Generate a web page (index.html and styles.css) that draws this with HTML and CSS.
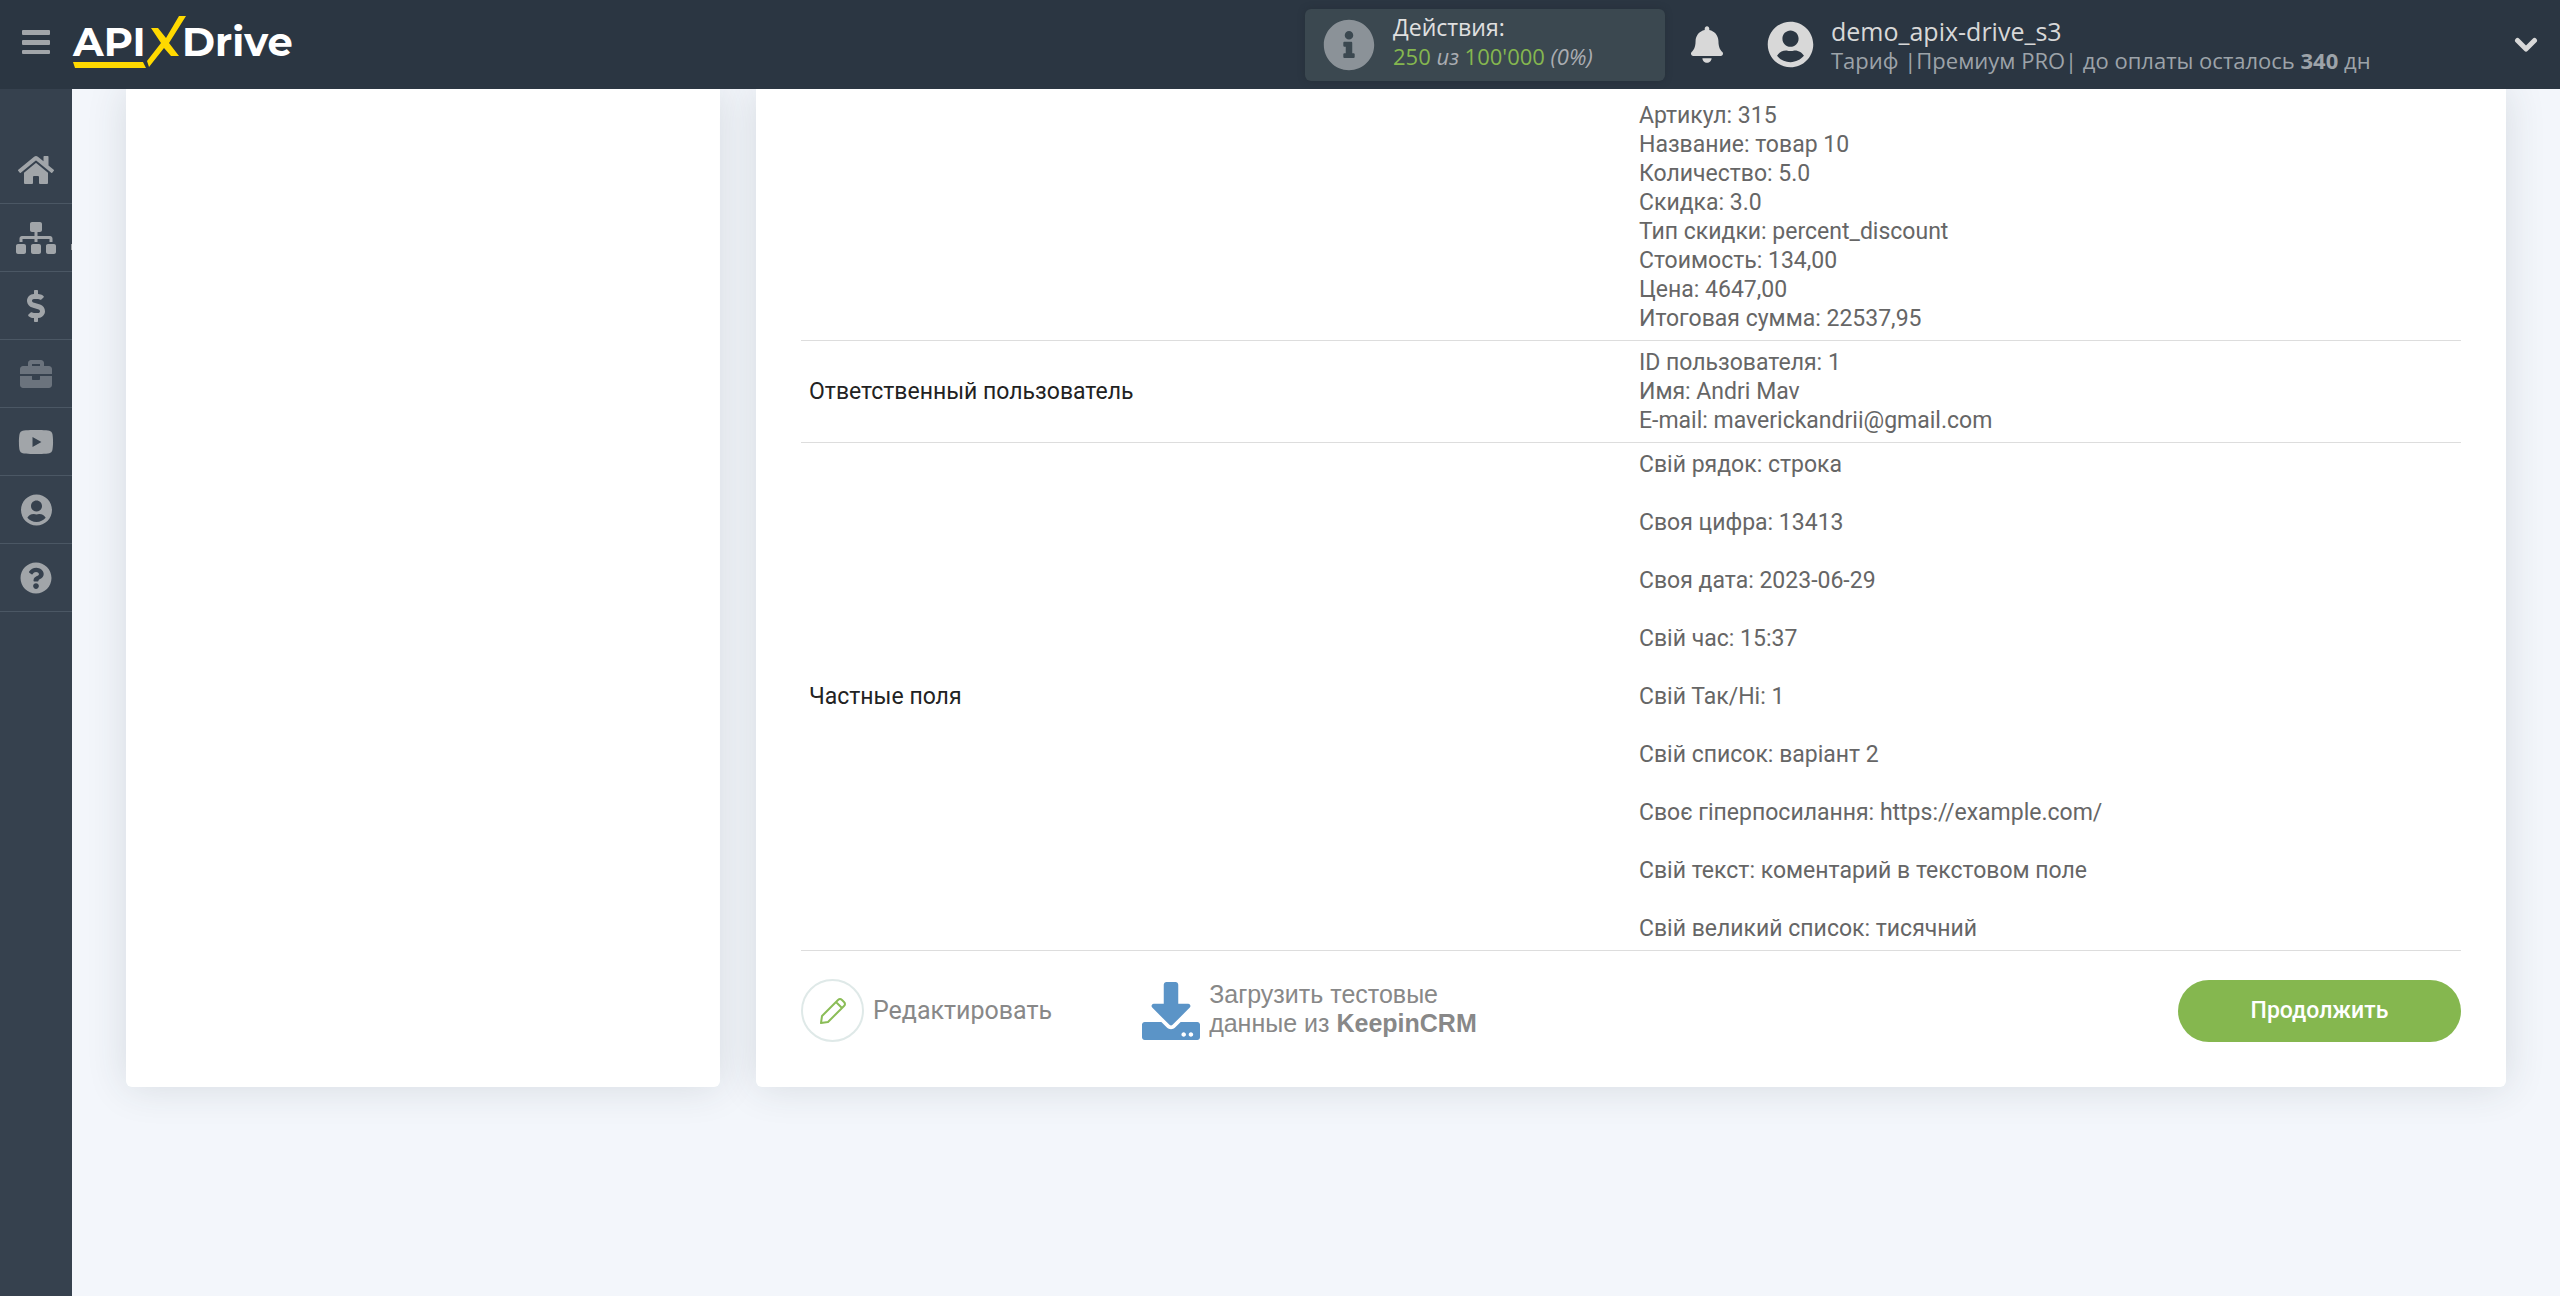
FILE: index.html
```html
<!DOCTYPE html>
<html lang="ru">
<head>
<meta charset="utf-8">
<title>APIX-Drive</title>
<link rel="stylesheet" href="styles.css">
</head>
<body>
<header class="topbar">
  <button class="icon-btn menu-btn" type="button" aria-label="Меню">
    <svg width="28" height="24" viewBox="0 0 28 24" fill="currentColor"><rect width="28" height="5" rx="1"/><rect y="10" width="28" height="5" rx="1"/><rect y="20" width="28" height="4" rx="1"/></svg>
  </button>
  <a class="logo" href="#" aria-label="APIX-Drive">
    <svg width="222" height="56" viewBox="0 0 222 56">
      <g class="logo-text"><text x="1" y="44">API</text><text x="110" y="44">Drive</text></g>
      <path class="logo-mark" d="M1 50H71L74 56H3zM75 49L89 31 79 16H86L94 26 107 4H114L97 31 107 44H99L92 36 77 55z"/>
    </svg>
  </a>
  <div class="usage">
    <svg class="usage-icon" width="52" height="52" viewBox="0 0 512 512" fill="currentColor"><path d="M256 8C119 8 8 119 8 256s111 248 248 248 248-111 248-248S393 8 256 8zm0 110a42 42 0 1 1 0 84 42 42 0 1 1 0-84zm56 254c0 7-5 12-12 12h-88c-7 0-12-5-12-12v-24c0-7 5-12 12-12h12v-64h-12c-7 0-12-5-12-12v-24c0-7 5-12 12-12h64c7 0 12 5 12 12v100h12c7 0 12 5 12 12z"/></svg>
    <div class="usage-text">
      <div class="usage-title">Действия:</div>
      <div class="usage-value"><span class="green">250</span> <i>из</i> <span class="green">100'000</span> <i>(0%)</i></div>
    </div>
  </div>
  <button class="icon-btn bell" type="button" aria-label="Уведомления">
    <svg width="32" height="37" viewBox="0 0 448 512" fill="currentColor"><path d="M224 512c35.320 0 63.970-28.650 63.970-64H160.030c0 35.350 28.650 64 63.970 64zm215.390-149.710c-19.320-20.760-55.470-51.990-55.470-154.290 0-77.700-54.480-139.900-127.940-155.160V32c0-17.670-14.320-32-31.980-32s-31.980 14.330-31.980 32v20.840C118.560 68.100 64.080 130.300 64.080 208c0 102.300-36.150 133.530-55.470 154.290-6 6.450-8.660 14.160-8.610 21.710.11 16.400 12.980 32 32.100 32h383.800c19.120 0 32-15.600 32.100-32 .05-7.550-2.610-15.270-8.610-21.710z"/></svg>
  </button>
  <div class="account">
    <svg width="47" height="47" viewBox="0 0 496 512" fill="currentColor"><path d="M248 8C111 8 0 119 0 256s111 248 248 248 248-111 248-248S385 8 248 8zm0 96c48.600 0 88 39.400 88 88s-39.400 88-88 88-88-39.400-88-88 39.400-88 88-88zm0 344c-58.700 0-111.300-26.600-146.500-68.200 18.800-35.400 55.600-59.800 98.500-59.800 2.400 0 4.800.4 7.100 1.100 13 4.200 26.600 6.900 40.900 6.900 14.300 0 28-2.700 40.900-6.900 2.300-.7 4.700-1.100 7.100-1.100 42.900 0 79.700 24.400 98.500 59.800C359.300 421.400 306.700 448 248 448z"/></svg>
    <div class="account-text">
      <div class="account-name">demo_apix-drive_s3</div>
      <div class="account-plan">Тариф |Премиум PRO| до оплаты осталось <b>340</b> дн</div>
    </div>
  </div>
  <button class="icon-btn expand" type="button" aria-label="Развернуть">
    <svg width="24" height="16" viewBox="0 0 24 16" fill="none" stroke="currentColor" stroke-width="5" stroke-linecap="round" stroke-linejoin="round"><path d="M3.500 3.500L12 12L20.500 3.500"/></svg>
  </button>
</header>
<div class="shell">
  <nav class="sidebar">
    <a href="#" aria-label="Главная"><svg width="36" height="32" viewBox="0 0 576 512" fill="currentColor"><path d="M280.370 148.260L96 300.110V464a16 16 0 0 0 16 16l112.060-.29a16 16 0 0 0 15.920-16V368a16 16 0 0 1 16-16h64a16 16 0 0 1 16 16v95.640a16 16 0 0 0 16 16.050L464 480a16 16 0 0 0 16-16V300L295.670 148.260a12.190 12.190 0 0 0-15.300 0zM571.600 251.470L488 182.560V44.050a12 12 0 0 0-12-12h-56a12 12 0 0 0-12 12v72.610L318.470 43a48 48 0 0 0-61 0L4.340 251.470a12 12 0 0 0-1.600 16.900l25.500 31A12 12 0 0 0 45.150 301l235.220-193.740a12.190 12.190 0 0 1 15.300 0L530.900 301a12 12 0 0 0 16.900-1.600l25.500-31a12 12 0 0 0-1.700-16.930z"/></svg></a>
    <a class="has-sub" href="#" aria-label="Связи"><svg width="40" height="32" viewBox="0 0 640 512" fill="currentColor"><path d="M128 352H32c-17.670 0-32 14.330-32 32v96c0 17.670 14.330 32 32 32h96c17.670 0 32-14.330 32-32v-96c0-17.670-14.330-32-32-32zm-24-80h192v48h48v-48h192v48h48v-57.590c0-21.170-17.230-38.410-38.410-38.410H344v-64h40c17.670 0 32-14.330 32-32V32c0-17.670-14.330-32-32-32H256c-17.670 0-32 14.330-32 32v96c0 17.670 14.330 32 32 32h40v64H94.410C73.230 224 56 241.230 56 262.410V320h48v-48zm264 80h-96c-17.670 0-32 14.330-32 32v96c0 17.670 14.330 32 32 32h96c17.670 0 32-14.330 32-32v-96c0-17.670-14.330-32-32-32zm240 0h-96c-17.670 0-32 14.330-32 32v96c0 17.670 14.330 32 32 32h96c17.670 0 32-14.330 32-32v-96c0-17.670-14.330-32-32-32z"/></svg></a>
    <a href="#" aria-label="Оплата"><svg width="18" height="32" viewBox="0 0 288 512" fill="currentColor"><path d="M209.200 233.400l-108-31.600C88.700 198.200 80 186.500 80 173.500c0-16.300 13.200-29.500 29.500-29.500h66.300c12.200 0 24.200 3.700 34.200 10.500 6.100 4.100 14.300 3.100 19.500-2l34.800-34c7.100-6.900 6.100-18.400-1.800-24.500C238 74.800 207.400 64.100 176 64V16c0-8.800-7.200-16-16-16h-32c-8.800 0-16 7.200-16 16v48h-2.500C45.800 64-5.400 118.700.5 183.600c4.200 46.100 39.400 83.600 83.800 96.600l102.500 30c12.500 3.700 21.200 15.300 21.200 28.300 0 16.300-13.200 29.500-29.500 29.500h-66.300C100 368 88 364.300 78 357.500c-6.100-4.100-14.300-3.100-19.500 2l-34.800 34c-7.100 6.900-6.100 18.400 1.800 24.500 24.500 19.200 55.100 29.900 86.500 30v48c0 8.800 7.200 16 16 16h32c8.800 0 16-7.200 16-16v-48.200c46.600-.9 90.300-28.600 105.700-72.700 21.500-61.600-14.600-124.800-72.500-141.700z"/></svg></a>
    <a class="dim" href="#" aria-label="Проекты"><svg width="32" height="32" viewBox="0 0 512 512" fill="currentColor"><path d="M320 336c0 8.840-7.160 16-16 16h-96c-8.840 0-16-7.160-16-16v-48H0v144c0 25.600 22.400 48 48 48h416c25.600 0 48-22.400 48-48V288H320v48zm144-208h-80V80c0-25.600-22.400-48-48-48H176c-25.600 0-48 22.400-48 48v48H48c-25.600 0-48 22.400-48 48v80h512v-80c0-25.600-22.400-48-48-48zm-144 0H192V96h128v32z"/></svg></a>
    <a href="#" aria-label="Видео"><svg width="36" height="32" viewBox="0 0 576 512" fill="currentColor"><path d="M549.655 124.083c-6.281-23.650-24.787-42.276-48.284-48.597C458.781 64 288 64 288 64S117.220 64 74.629 75.486c-23.497 6.322-42.003 24.947-48.284 48.597-11.412 42.867-11.412 132.305-11.412 132.305s0 89.438 11.412 132.305c6.281 23.650 24.787 41.500 48.284 47.821C117.220 448 288 448 288 448s170.780 0 213.371-11.486c23.497-6.321 42.003-24.171 48.284-47.821 11.412-42.867 11.412-132.305 11.412-132.305s0-89.438-11.412-132.305zM232.145 337.591V175.185l142.739 81.205-142.739 81.201z"/></svg></a>
    <a href="#" aria-label="Профиль"><svg width="31" height="32" viewBox="0 0 496 512" fill="currentColor"><path d="M248 8C111 8 0 119 0 256s111 248 248 248 248-111 248-248S385 8 248 8zm0 96c48.600 0 88 39.400 88 88s-39.400 88-88 88-88-39.400-88-88 39.400-88 88-88zm0 344c-58.700 0-111.300-26.600-146.500-68.200 18.800-35.400 55.600-59.800 98.500-59.800 2.400 0 4.800.4 7.100 1.100 13 4.200 26.600 6.900 40.900 6.900 14.300 0 28-2.700 40.900-6.900 2.300-.7 4.700-1.100 7.100-1.100 42.900 0 79.700 24.400 98.500 59.800C359.300 421.400 306.700 448 248 448z"/></svg></a>
    <a href="#" aria-label="Помощь"><svg width="32" height="32" viewBox="0 0 512 512" fill="currentColor"><path d="M504 256c0 136.997-111.043 248-248 248S8 392.997 8 256C8 119.083 119.043 8 256 8s248 111.083 248 248zM262.655 90c-54.497 0-89.255 22.957-116.549 63.758-3.536 5.286-2.353 12.415 2.715 16.258l34.699 26.310c5.205 3.947 12.621 3.008 16.665-2.122 17.864-22.658 30.113-35.797 57.303-35.797 20.429 0 45.698 13.148 45.698 32.958 0 14.976-12.363 22.667-32.534 33.976C247.128 238.528 216 254.941 216 296v4c0 6.627 5.373 12 12 12h56c6.627 0 12-5.373 12-12v-1.333c0-28.462 83.186-29.647 83.186-106.667 0-58.002-60.165-102-116.531-102zM256 338c-25.365 0-46 20.635-46 46 0 25.364 20.635 46 46 46s46-20.636 46-46c0-25.365-20.635-46-46-46z"/></svg></a>
  </nav>
  <main class="content">
    <section class="card steps"></section>
    <section class="card details">
      <table class="data">
        <tbody>
          <tr><th scope="row"></th><td>Артикул: 315<br>Название: товар 10<br>Количество: 5.0<br>Скидка: 3.0<br>Тип скидки: percent_discount<br>Стоимость: 134,00<br>Цена: 4647,00<br>Итоговая сумма: 22537,95</td></tr>
          <tr><th scope="row">Ответственный пользователь</th><td>ID пользователя: 1<br>Имя: Andri Mav<br>E-mail: maverickandrii@gmail.com</td></tr>
          <tr><th scope="row">Частные поля</th><td>
            <ul class="fields">
              <li>Свій рядок: строка</li>
              <li>Своя цифра: 13413</li>
              <li>Своя дата: 2023-06-29</li>
              <li>Свій час: 15:37</li>
              <li>Свій Так/Ні: 1</li>
              <li>Свій список: варіант 2</li>
              <li>Своє гіперпосилання: https://example.com/</li>
              <li>Свій текст: коментарий в текстовом поле</li>
              <li>Свій великий список: тисячний</li>
            </ul>
          </td></tr>
        </tbody>
      </table>
      <div class="actions">
        <button class="action edit" type="button">
          <span class="edit-ring"><svg width="28" height="28" viewBox="0 0 28 28" fill="none" stroke="currentColor" stroke-width="2" stroke-linejoin="round"><path d="M2 26L3 19L19 3Q21 1 23 3L25 5Q27 7 25 9L9 25zM17 5L23 11"/></svg></span>
          <span>Редактировать</span>
        </button>
        <button class="action load" type="button">
          <svg width="58" height="58" viewBox="0 0 512 512" fill="currentColor"><path d="M216 0h80c13.300 0 24 10.700 24 24v168h87.700c17.800 0 26.700 21.500 14.100 34.100L269.700 378.300c-7.500 7.500-19.800 7.500-27.300 0L90.100 226.100c-12.600-12.600-3.700-34.100 14.100-34.100H192V24c0-13.300 10.700-24 24-24zm296 376v112c0 13.300-10.700 24-24 24H24c-13.300 0-24-10.700-24-24V376c0-13.300 10.700-24 24-24h146.700l49 49c20.100 20.100 52.500 20.100 72.600 0l49-49H488c13.300 0 24 10.700 24 24zm-124 88c0-11-9-20-20-20s-20 9-20 20 9 20 20 20 20-9 20-20zm64 0c0-11-9-20-20-20s-20 9-20 20 9 20 20 20 20-9 20-20z"/></svg>
          <span class="load-text">Загрузить тестовые<br>данные из <b>KeepinCRM</b></span>
        </button>
        <button class="next" type="button">Продолжить</button>
      </div>
    </section>
  </main>
</div>
</body>
</html>
```
FILE: styles.css
```css
* { box-sizing: border-box; }
body {
  margin: 0;
  min-height: 100vh;
  display: flex;
  flex-direction: column;
  background: #f3f6fb;
  font-family: Roboto, "Liberation Sans", sans-serif;
  font-size: 23px;
  line-height: 29px;
  color: #666;
}
button { font: inherit; color: inherit; background: none; border: 0; padding: 0; cursor: pointer; }
a { color: inherit; text-decoration: none; }
svg { display: block; flex: none; }

.topbar {
  display: flex;
  align-items: center;
  height: 89px;
  padding-right: 22px;
  background: #2b3642;
  color: #d8d8d8;
  font-family: "Open Sans", "Noto Sans", sans-serif;
  position: relative;
  z-index: 1;
}
.icon-btn { display: flex; align-items: center; justify-content: center; }
.menu-btn { align-self: flex-start; width: 72px; height: 84px; color: #a1a5a9; }
.logo { flex: 1; padding-bottom: 9px; }
.logo-text { fill: #fff; font: 700 40px Montserrat, Inter, sans-serif; }
.logo-mark { fill: #ffd900; }
.usage {
  display: flex;
  align-items: center;
  gap: 18px;
  width: 360px;
  height: 72px;
  padding-left: 18px;
  border-radius: 6px;
  background: #3b4850;
  box-shadow: 0 0 6px #26303a;
}
.usage-icon { color: #8b9298; }
.usage-title { color: #e0e0e0; }
.usage-text { padding-bottom: 5px; }
.usage-title, .usage-value { font-size: 22px; line-height: 29px; }
.usage-title { font-size: 23px; }
.usage-value { color: #aaadb2; }
.green { color: #85b74f; }
.bell { width: 32px; margin: 0 44px 0 26px; }
.account { display: flex; align-items: center; gap: 17px; width: 747px; }
.account-text { padding-top: 2px; }
.account-name { font-size: 25px; line-height: 29px; }
.account-plan { font-size: 22px; line-height: 29px; color: #9da3a9; }
.expand { width: 24px; }

.shell { flex: 1; display: flex; }
.sidebar { width: 72px; flex: none; padding-top: 47px; background: #36414e; color: #a1a5a9; }
.sidebar a {
  display: flex;
  align-items: center;
  justify-content: center;
  height: 68px;
  border-bottom: 1px solid #4b5764;
}
.sidebar .dim { color: #6b737d; }
.has-sub { position: relative; }
.has-sub::after { content: ""; position: absolute; right: 0; top: 40px; width: 1px; height: 6px; background: #a1a5a9; }

.content {
  flex: 1;
  display: grid;
  grid-template-columns: 594fr 1750fr;
  gap: 36px;
  padding: 0 54px 210px;
}
.card { background: #fff; border-radius: 0 0 6px 6px; box-shadow: 0 0 40px rgba(43, 54, 66, .14); }
.details { padding: 5px 45px 45px; }

.data { width: 100%; table-layout: fixed; border-collapse: collapse; }
.data tr { border-bottom: 1px solid #ddd; }
.data th, .data td { padding: 7px 8px; text-align: left; vertical-align: middle; font-weight: 400; }
.data th { color: #222; }
.fields { display: grid; gap: 29px; margin: 0; padding: 0; list-style: none; }

.actions { display: flex; align-items: center; padding-top: 28px; }
.action { display: flex; align-items: center; gap: 9px; font-size: 25px; color: #888; text-align: left; }
.edit-ring { display: flex; align-items: center; justify-content: center; width: 63px; height: 63px; border: 2px solid #dfe9e8; border-radius: 50%; color: #8bbd57; }
.load { margin-left: 90px; }
.load svg { color: #5b94c7; }
.load-text { font-family: "Liberation Sans", Arial, sans-serif; padding-bottom: 4px; }
.next { margin-left: auto; width: 283px; height: 62px; border-radius: 31px; background: #85b74f; color: #fff; font-weight: 500; }
```
